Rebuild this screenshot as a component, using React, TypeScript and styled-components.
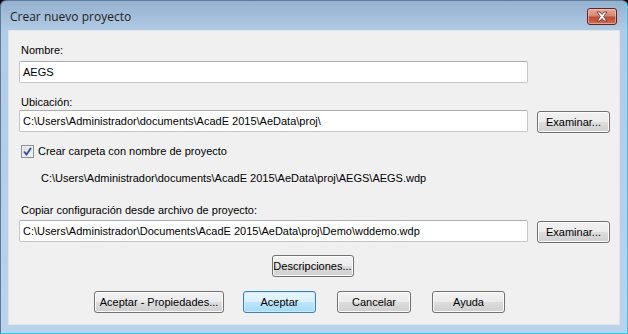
import React from "react";
import styled, { createGlobalStyle, css } from "styled-components";

const Global = createGlobalStyle`
  html, body { margin: 0; padding: 0; background: #000; }
  body { width: 628px; height: 334px; overflow: hidden; }
  * { box-sizing: border-box; }
`;

const Window = styled.div`
  width: 628px;
  height: 334px;
  display: flex;
  flex-direction: column;
  border-radius: 6px 6px 0 0;
  background: linear-gradient(to bottom, #95b1cf 0px, #b2cbe5 30px, #bad2ea 100%);
  border-left: 1px solid #5c7a99;
  border-top: 1px solid #5c7a99;
  border-right: 1px solid #20d0ee;
  border-bottom: 1px solid #20d0ee;
  font-family: "Liberation Sans", Arial, sans-serif;
  font-size: 11px;
  color: #000;
`;

const TitleBar = styled.div`
  height: 29px;
  display: flex;
  align-items: center;
  justify-content: space-between;
  padding: 0 10px 0 9px;
`;

const Title = styled.span`
  font-family: "Open Sans", "Noto Sans", sans-serif;
  font-size: 12px;
  color: #1e1e1e;
  margin-top: 1px;
`;

const CloseButton = styled.div`
  width: 30px;
  height: 17px;
  margin-top: 2px;
  border: 1px solid #5b2621;
  border-radius: 3px;
  background: linear-gradient(to bottom, #e8a999 0%, #d88572 45%, #c24a31 55%, #d06a4f 100%);
  box-shadow: inset 0 0 0 1px rgba(255, 220, 210, 0.5);
  display: flex;
  align-items: center;
  justify-content: center;
`;

const Panel = styled.div`
  margin: 0 7px 0 7px;
  flex: 0 0 295px;
  background: #f0f0f0;
  border: 1px solid #dde6f0;
  display: flex;
  flex-direction: column;
  padding: 0 9px 0 10px;
`;

const Label = styled.div<{ $top: number }>`
  margin-top: ${(p) => p.$top}px;
  height: 13px;
  line-height: 13px;
  padding-left: 2px;
  color: #000;
`;

const FieldRow = styled.div<{ $top: number }>`
  margin-top: ${(p) => p.$top}px;
  display: flex;
  align-items: flex-start;
  gap: 9px;
`;

const TextInput = styled.div`
  width: 509px;
  height: 22px;
  background: #fff;
  border: 1px solid #c3c7cd;
  border-top-color: #abadb3;
  border-radius: 2px;
  padding: 0 3px;
  line-height: 20px;
  white-space: nowrap;
  overflow: hidden;
`;

const Button = styled.div<{ $w: number; $ml?: number; $mt?: number; $default?: boolean }>`
  width: ${(p) => p.$w}px;
  height: 22px;
  margin-left: ${(p) => p.$ml ?? 0}px;
  margin-top: ${(p) => p.$mt ?? 0}px;
  border: 1px solid #707070;
  border-radius: 3px;
  display: flex;
  align-items: center;
  justify-content: center;
  white-space: nowrap;
  box-shadow: inset 0 0 0 1px #fcfcfc;
  background: linear-gradient(to bottom, #f2f2f2 0%, #ebebeb 50%, #dddddd 50%, #cfcfcf 100%);
  ${(p) =>
    p.$default &&
    css`
      border-color: #3c7fb1;
      box-shadow: inset 0 0 0 1px #c8ecfd;
      background: linear-gradient(to bottom, #eaf6fd 0%, #d9f0fc 50%, #bee6fd 50%, #a7d9f5 100%);
    `}
`;

const CheckRow = styled.div`
  margin-top: 11px;
  display: flex;
  align-items: center;
  gap: 4px;
  height: 14px;
  padding-left: 2px;
`;

const CheckBox = styled.div`
  width: 13px;
  height: 13px;
  border: 1px solid #8e8f8f;
  background: linear-gradient(135deg, #dcdcdc 0%, #f4f4f4 100%);
  box-shadow: inset 0 0 0 1px #f0f0f0;
  display: flex;
  align-items: center;
  justify-content: center;
`;

const PathText = styled.div`
  margin-top: 14px;
  padding-left: 22px;
  height: 13px;
  line-height: 13px;
`;

const CenterRow = styled.div<{ $top: number }>`
  margin-top: ${(p) => p.$top}px;
  display: flex;
  justify-content: center;
`;

const ButtonRow = styled.div`
  margin-top: 14px;
  display: flex;
  padding-left: 75px;
`;

export default function App() {
  return (
    <>
      <Global />
      <Window>
        <TitleBar>
          <Title>Crear nuevo proyecto</Title>
          <CloseButton>
            <svg width="14" height="11" viewBox="0 0 14 11">
              <path
                d="M2 1 L5 1 L7 3.5 L9 1 L12 1 L8.6 5.5 L12 10 L9 10 L7 7.5 L5 10 L2 10 L5.4 5.5 Z"
                fill="#fff"
                stroke="#5a3a36"
                strokeWidth="0.9"
                strokeLinejoin="round"
              />
            </svg>
          </CloseButton>
        </TitleBar>
        <Panel>
          <Label $top={13}>Nombre:</Label>
          <FieldRow $top={4}>
            <TextInput>AEGS</TextInput>
          </FieldRow>
          <Label $top={13}>Ubicación:</Label>
          <FieldRow $top={1}>
            <TextInput>C:\Users\Administrador\documents\AcadE 2015\AeData\proj\</TextInput>
            <Button $w={73} $mt={1}>Examinar...</Button>
          </FieldRow>
          <CheckRow>
            <CheckBox>
              <svg width="9" height="9" viewBox="0 0 9 9">
                <path d="M1 4.5 L3.5 7.5 L8 1" fill="none" stroke="#2b4fa8" strokeWidth="1.8" />
              </svg>
            </CheckBox>
            <span>Crear carpeta con nombre de proyecto</span>
          </CheckRow>
          <PathText>C:\Users\Administrador\documents\AcadE 2015\AeData\proj\AEGS\AEGS.wdp</PathText>
          <Label $top={19}>Copiar configuración desde archivo de proyecto:</Label>
          <FieldRow $top={3}>
            <TextInput>C:\Users\Administrador\Documents\AcadE 2015\AeData\proj\Demo\wddemo.wdp</TextInput>
            <Button $w={73} $mt={1}>Examinar...</Button>
          </FieldRow>
          <CenterRow $top={12}>
            <Button $w={82} $ml={-4}>Descripciones...</Button>
          </CenterRow>
          <ButtonRow>
            <Button $w={130}>Aceptar - Propiedades...</Button>
            <Button $w={73} $ml={19} $default>Aceptar</Button>
            <Button $w={74} $ml={21}>Cancelar</Button>
            <Button $w={73} $ml={21}>Ayuda</Button>
          </ButtonRow>
        </Panel>
      </Window>
    </>
  );
}
